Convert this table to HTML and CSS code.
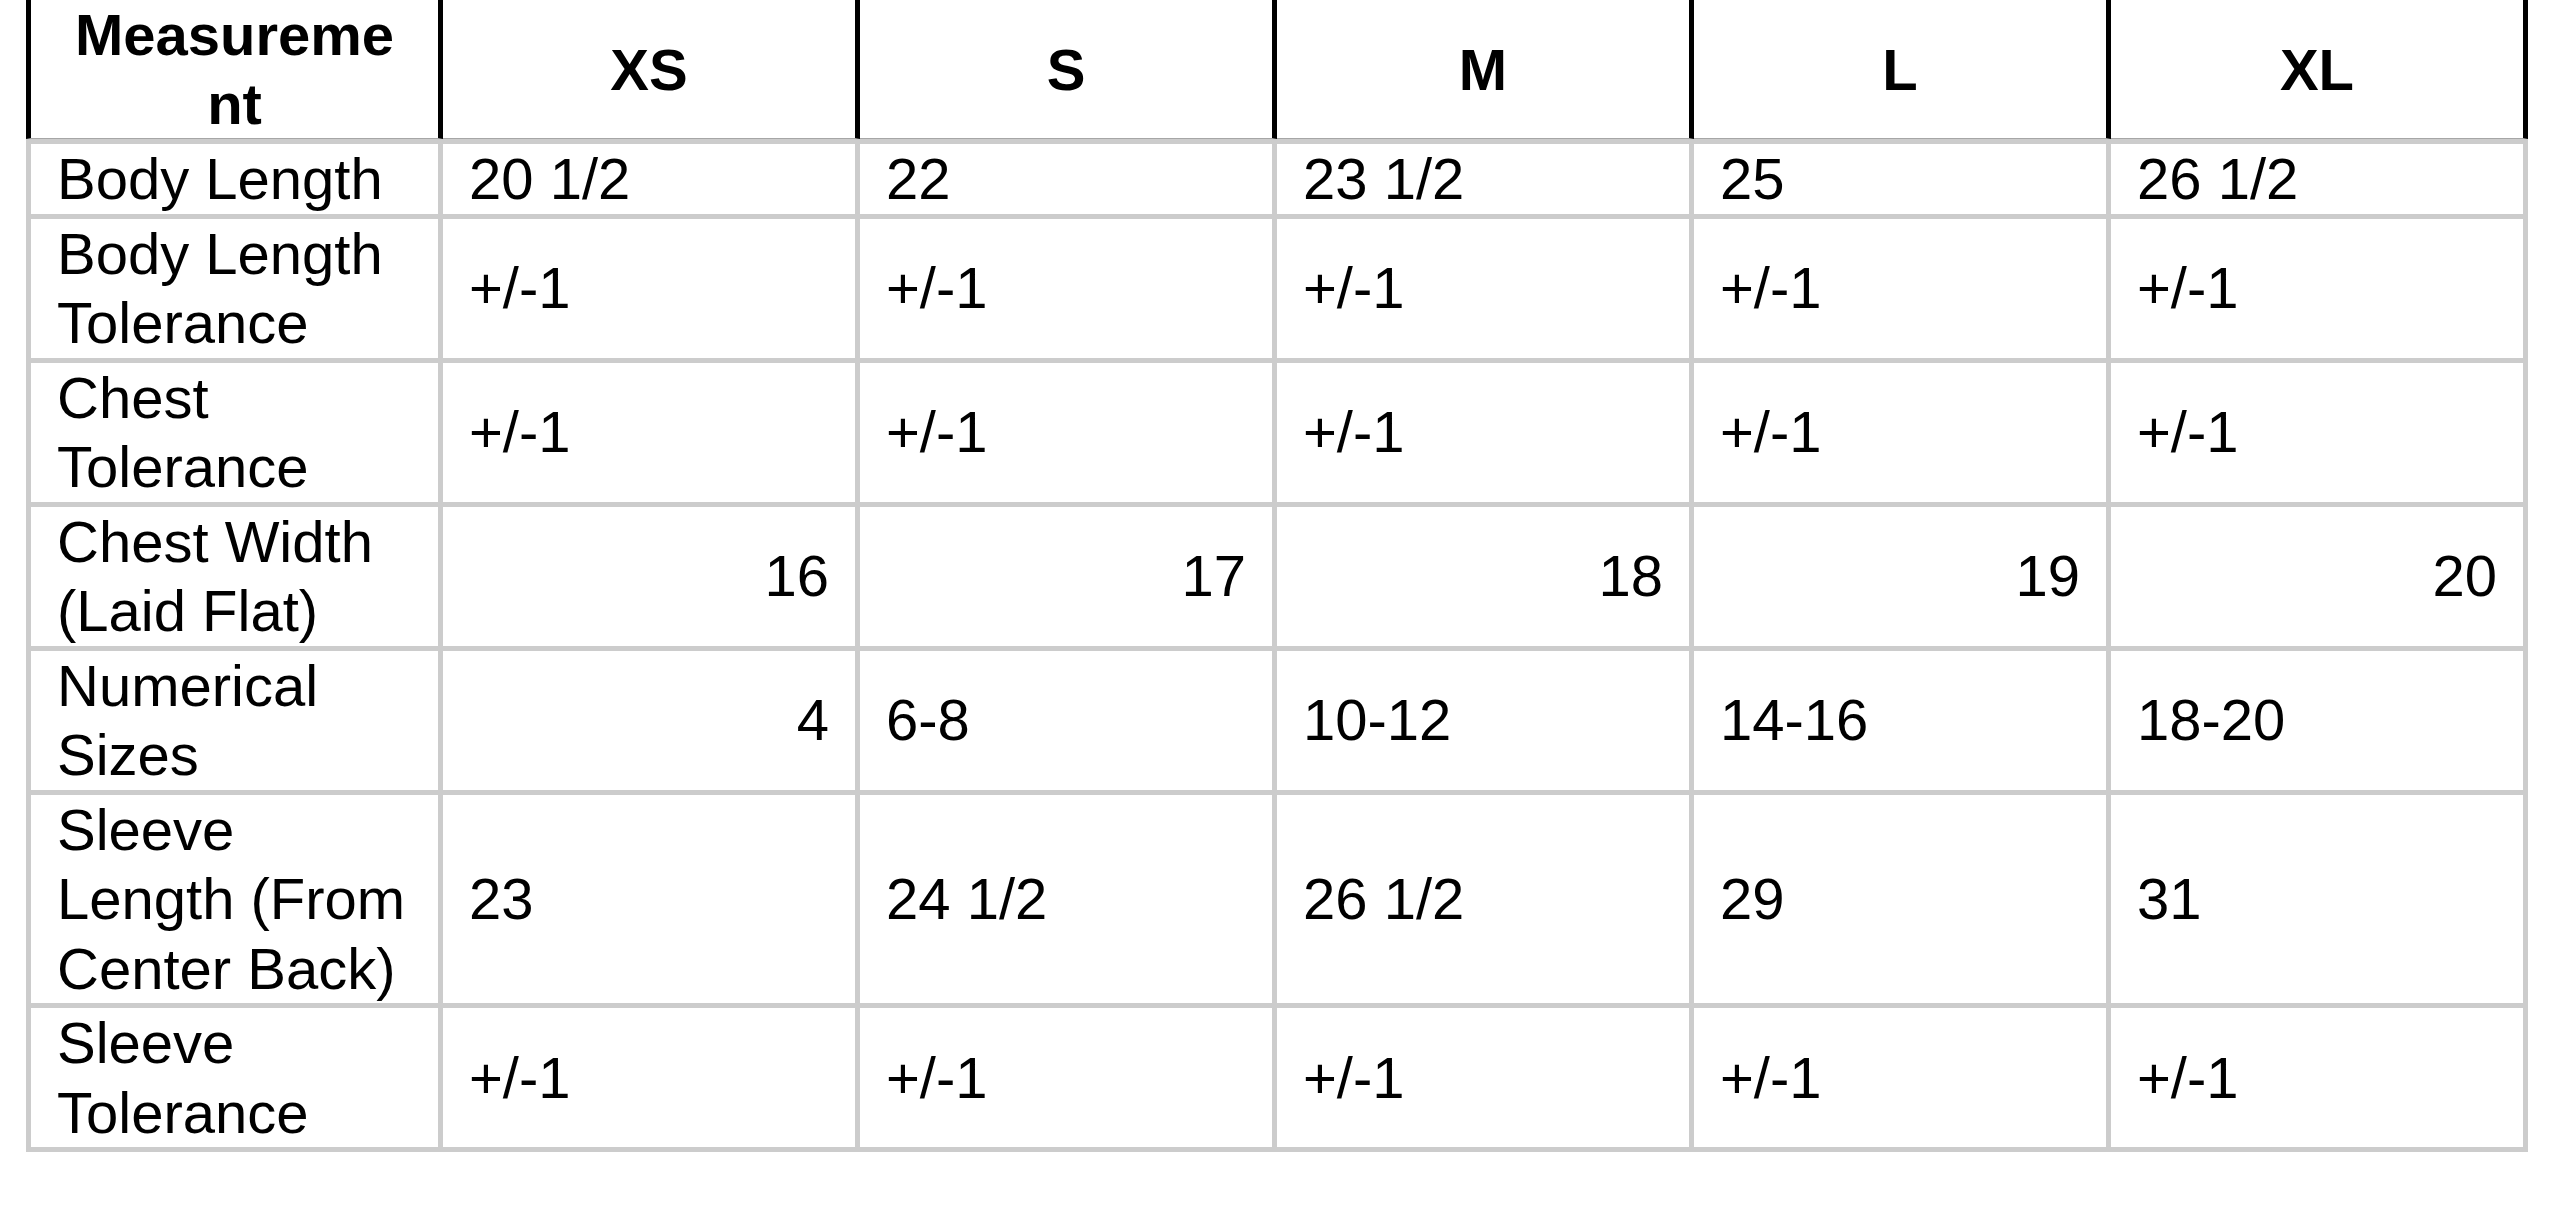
FILE: index.html
```html
<!DOCTYPE html>
<html lang="en">
<head>
<meta charset="utf-8">
<title>Size Chart</title>
<link rel="stylesheet" href="styles.css">
</head>
<body>
<table class="sizes">
  <thead>
    <tr>
      <th>Measurement</th>
      <th>XS</th>
      <th>S</th>
      <th>M</th>
      <th>L</th>
      <th>XL</th>
    </tr>
  </thead>
  <tbody>
    <tr>
      <td>Body Length</td>
      <td>20 1/2</td>
      <td>22</td>
      <td>23 1/2</td>
      <td>25</td>
      <td>26 1/2</td>
    </tr>
    <tr>
      <td>Body Length Tolerance</td>
      <td>+/-1</td>
      <td>+/-1</td>
      <td>+/-1</td>
      <td>+/-1</td>
      <td>+/-1</td>
    </tr>
    <tr>
      <td>Chest Tolerance</td>
      <td>+/-1</td>
      <td>+/-1</td>
      <td>+/-1</td>
      <td>+/-1</td>
      <td>+/-1</td>
    </tr>
    <tr>
      <td>Chest Width (Laid Flat)</td>
      <td class="num">16</td>
      <td class="num">17</td>
      <td class="num">18</td>
      <td class="num">19</td>
      <td class="num">20</td>
    </tr>
    <tr>
      <td>Numerical Sizes</td>
      <td class="num">4</td>
      <td>6-8</td>
      <td>10-12</td>
      <td>14-16</td>
      <td>18-20</td>
    </tr>
    <tr>
      <td>Sleeve Length (From Center Back)</td>
      <td>23</td>
      <td>24 1/2</td>
      <td>26 1/2</td>
      <td>29</td>
      <td>31</td>
    </tr>
    <tr>
      <td>Sleeve Tolerance</td>
      <td>+/-1</td>
      <td>+/-1</td>
      <td>+/-1</td>
      <td>+/-1</td>
      <td>+/-1</td>
    </tr>
  </tbody>
</table>
</body>
</html>
```
FILE: styles.css
```css
html, body {
  margin: 0;
  padding: 0;
  background: #ffffff;
}

body {
  font-family: "Liberation Sans", Arial, Helvetica, sans-serif;
  color: #000000;
}

.sizes {
  margin-left: 26px;
  width: 2502px;
  table-layout: fixed;
  border-collapse: separate;
  border-spacing: 0;
  font-size: 58px;
}

.sizes th {
  font-weight: 700;
  line-height: 69px;
  padding: 0 30px;
  text-align: center;
  vertical-align: middle;
  border-right: 5px solid #000000;
  border-bottom: 1px solid #a6a6a6;
  overflow-wrap: anywhere;
}

.sizes th:first-child {
  border-left: 5px solid #000000;
}

.sizes td {
  font-weight: 400;
  line-height: 69.5px;
  padding: 0 26px;
  text-align: left;
  vertical-align: middle;
  border-right: 5px solid #cccccc;
  border-bottom: 5px solid #cccccc;
}

.sizes td:first-child {
  border-left: 5px solid #cccccc;
}

.sizes tbody tr:first-child td {
  border-top: 5px solid #cccccc;
}

.sizes td.num {
  text-align: right;
}
```
